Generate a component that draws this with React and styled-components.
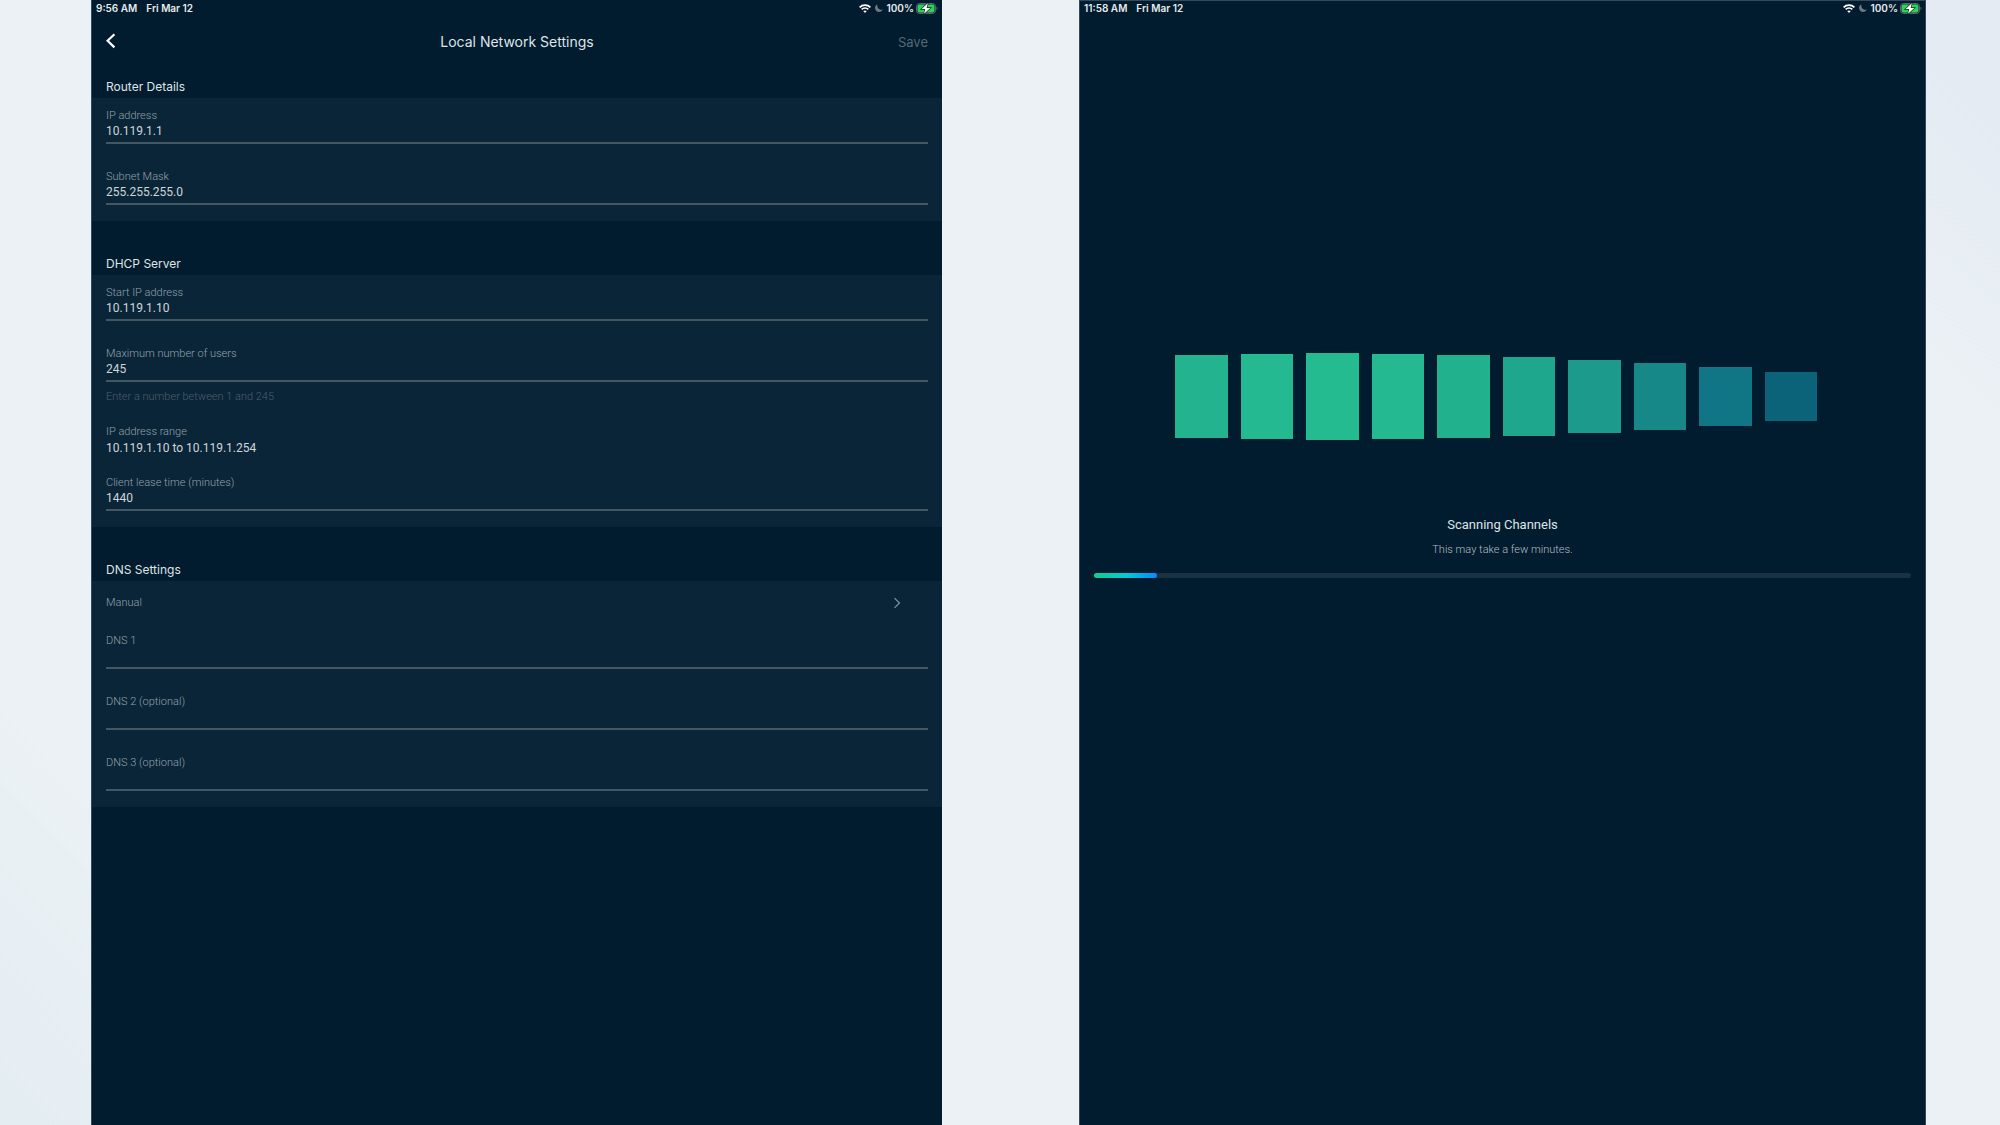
import * as React from "react"
import styled, { createGlobalStyle } from "styled-components"

const GlobalStyle = createGlobalStyle`
    *,
    *::before,
    *::after {
        box-sizing: border-box;
    }
    body {
        margin: 0;
        font-family: Roboto, "Liberation Sans", sans-serif;
        font-weight: 400;
        color: #dfe4e7;
    }
    h1,
    h2,
    p {
        margin: 0;
        font-weight: inherit;
    }
    button,
    input {
        margin: 0;
        padding: 0;
        border: none;
        background: none;
        color: inherit;
        font: inherit;
    }
`

const Page = styled.div`
    min-height: 100vh;
    display: grid;
    grid-template-columns: 851fr 847fr;
    gap: 137px;
    padding: 0 74px 0 91px;
    background: linear-gradient(
        45deg,
        #e4edf2 0%,
        #ebf1f5 14%,
        #ebf1f5 86%,
        #e4ebf2 96%
    );
`

const Screen = styled.main`
    display: flex;
    flex-direction: column;
    background: #001c2e;
    border-left: 1px solid #34495a;
    box-shadow: ${({ $framed }) =>
        $framed ? "inset 0 1px #34495a, inset -1px 0 #34495a" : "none"};
`

const StatusBar = styled.div`
    display: flex;
    align-items: center;
    justify-content: space-between;
    height: 16px;
    padding: 0 4px;
    font-family: Inter, "Liberation Sans", sans-serif;
    font-size: 10px;
    font-weight: 600;
    line-height: 16px;
    color: #e6eaec;
`

const StatusGroup = styled.div`
    display: flex;
    align-items: center;
    gap: ${({ $gap }) => $gap}px;
`

const NavBar = styled.header`
    display: grid;
    grid-template-columns: 1fr auto 1fr;
    align-items: center;
    height: 52px;
    margin-bottom: 8px;
    padding: 0 14px;
    font-family: Inter, "Liberation Sans", sans-serif;
`

const BackButton = styled.button`
    display: flex;
    justify-self: start;
    padding-bottom: 3px;
    color: #fff;
`

const NavTitle = styled.h1`
    font-size: 14px;
    line-height: 20px;
`

const SaveButton = styled.button`
    justify-self: end;
    font-size: 13px;
    line-height: 20px;
    color: #566874;
`

const Section = styled.section`
    & + & {
        margin-top: 32px;
    }
`

const SectionTitle = styled.h2`
    padding: 1px 14px;
    font-family: Inter, "Liberation Sans", sans-serif;
    font-size: 12px;
    line-height: 20px;
`

const Card = styled.div`
    display: flex;
    flex-direction: column;
    padding: 10px 14px 16px;
    background: #0a2538;
`

const FieldBox = styled.div`
    display: flex;
    flex-direction: column;

    & + & {
        margin-top: 25px;
    }
`

const Label = styled.label`
    font-size: 11px;
    font-weight: 300;
    line-height: 15px;
    color: #93a1ab;
`

const Input = styled.input`
    width: 100%;
    height: 21px;
    padding-bottom: 4px;
    border-bottom: 2px solid #425664;
    border-radius: 0;
    font-size: 12px;
    line-height: 15px;
    color: #cfd6da;
    outline: none;
`

const Hint = styled.p`
    margin-top: 7px;
    font-size: 11px;
    font-weight: 300;
    line-height: 15px;
    color: #4a5e6c;
`

const RangeBox = styled.div`
    display: flex;
    flex-direction: column;
    gap: 2px;
    margin: 20px 0 19px;
`

const RangeLabel = styled.p`
    font-size: 11px;
    font-weight: 300;
    line-height: 15px;
    color: #93a1ab;
`

const RangeValue = styled.p`
    font-size: 12px;
    line-height: 15px;
    color: #cfd6da;
`

const ModeButton = styled.button`
    display: flex;
    align-items: center;
    justify-content: space-between;
    height: 23px;
    margin-bottom: 19px;
    padding-right: 27px;
    font-size: 11px;
    font-weight: 300;
    line-height: 15px;
    color: #93a1ab;
`

const ScanArea = styled.div`
    display: flex;
    flex-direction: column;
    align-items: center;
    padding: 337px 15px 0 14px;
`

const Bars = styled.div`
    display: flex;
    align-items: center;
    gap: 13px;
    width: 100%;
    height: 87px;
    padding: 0 94px 0 81px;
`

const Bar = styled.div`
    flex: 1;
    height: ${({ $height }) => $height}px;
    background: ${({ $color }) => $color};
`

const ScanTitle = styled.h1`
    margin-top: 75px;
    font-size: 13px;
    line-height: 20px;
`

const ScanText = styled.p`
    margin-top: 7px;
    font-size: 11px;
    font-weight: 300;
    line-height: 15px;
    color: #b4bec5;
`

const Track = styled.div`
    width: 100%;
    height: 5px;
    margin-top: 16px;
    border-radius: 3px;
    background: #1a3142;
`

const TrackFill = styled.div`
    height: 100%;
    border-radius: 3px;
    background: linear-gradient(to right, #14c98c 0%, #00cdd6 50%, #008bff 100%);
`

const bars = [
    { height: 83, color: "#23b38e" },
    { height: 85, color: "#24b990" },
    { height: 87, color: "#24bb91" },
    { height: 85, color: "#24b990" },
    { height: 83, color: "#22b18d" },
    { height: 79, color: "#1fa78d" },
    { height: 73, color: "#1c9a8c" },
    { height: 67, color: "#178888" },
    { height: 59, color: "#107585" },
    { height: 49, color: "#0a6379" },
]

const WifiIcon = () => (
    <svg width="12" height="9" viewBox="0 0 12 9" fill="none" aria-hidden="true">
        <path d="M0.6 3.3C3.6 0.3 8.4 0.3 11.4 3.3" stroke="#fff" strokeWidth="1.7" />
        <path d="M2.7 5.4C4.5 3.6 7.5 3.6 9.3 5.4" stroke="#fff" strokeWidth="1.6" />
        <path d="M6 8.9L4.2 7.1C5.2 6.2 6.8 6.2 7.8 7.1Z" fill="#fff" />
    </svg>
)

const MoonIcon = () => (
    <svg width="8" height="8" viewBox="0 0 8 8" aria-hidden="true">
        <path
            d="M2.4 0.3C0.6 1.1 0 2.6 0 4C0 6.2 1.8 8 4 8C5.6 8 7.2 7.1 7.8 5.6C4.6 6.6 1.6 3.8 2.4 0.3Z"
            fill="#6b7983"
        />
    </svg>
)

const BatteryIcon = () => (
    <svg width="22" height="11" viewBox="0 0 22 11" aria-hidden="true">
        <rect
            x="0.5"
            y="0.5"
            width="19"
            height="10"
            rx="3"
            fill="#1d3445"
            stroke="#566672"
        />
        <path d="M20.5 3.8C21.8 4.1 21.8 6.9 20.5 7.2Z" fill="#566672" />
        <rect x="1.6" y="1.6" width="16.8" height="7.8" rx="1.8" fill="#30d158" />
        <path
            d="M11.8 0.2L5.6 6.1H9.2L8.1 10.8L14.3 4.9H10.7Z"
            fill="#fff"
            stroke="#12301f"
            strokeWidth="1.4"
            paintOrder="stroke"
        />
    </svg>
)

const Status = ({ time }) => {
    return (
        <StatusBar>
            <StatusGroup $gap={9}>
                <span>{time}</span>
                <span>Fri Mar 12</span>
            </StatusGroup>
            <StatusGroup $gap={4}>
                <WifiIcon />
                <MoonIcon />
                <StatusGroup $gap={2}>
                    <span>100%</span>
                    <BatteryIcon />
                </StatusGroup>
            </StatusGroup>
        </StatusBar>
    )
}

const Field = ({ id, label, value = "", hint }) => {
    return (
        <FieldBox>
            <Label htmlFor={id}>{label}</Label>
            <Input id={id} type="text" defaultValue={value} />
            {hint && <Hint>{hint}</Hint>}
        </FieldBox>
    )
}

const NetworkSettings = () => {
    return (
        <Screen>
            <Status time="9:56 AM" />
            <NavBar>
                <BackButton aria-label="Back">
                    <svg width="10" height="16" viewBox="0 0 10 16" fill="none">
                        <path d="M8.4 1.2L1.6 7.8L8.4 14.4" stroke="currentColor" strokeWidth="2.2" />
                    </svg>
                </BackButton>
                <NavTitle>Local Network Settings</NavTitle>
                <SaveButton>Save</SaveButton>
            </NavBar>

            <Section>
                <SectionTitle>Router Details</SectionTitle>
                <Card>
                    <Field id="ip" label="IP address" value="10.119.1.1" />
                    <Field id="mask" label="Subnet Mask" value="255.255.255.0" />
                </Card>
            </Section>

            <Section>
                <SectionTitle>DHCP Server</SectionTitle>
                <Card>
                    <Field id="start" label="Start IP address" value="10.119.1.10" />
                    <Field
                        id="users"
                        label="Maximum number of users"
                        value="245"
                        hint="Enter a number between 1 and 245"
                    />
                    <RangeBox>
                        <RangeLabel>IP address range</RangeLabel>
                        <RangeValue>10.119.1.10 to 10.119.1.254</RangeValue>
                    </RangeBox>
                    <Field id="lease" label="Client lease time (minutes)" value="1440" />
                </Card>
            </Section>

            <Section>
                <SectionTitle>DNS Settings</SectionTitle>
                <Card>
                    <ModeButton>
                        Manual
                        <svg width="8" height="12" viewBox="0 0 8 12" fill="none" aria-hidden="true">
                            <path d="M1.5 1.2L6.5 6L1.5 10.8" stroke="#8a98a2" strokeWidth="1.1" />
                        </svg>
                    </ModeButton>
                    <Field id="dns1" label="DNS 1" />
                    <Field id="dns2" label="DNS 2 (optional)" />
                    <Field id="dns3" label="DNS 3 (optional)" />
                </Card>
            </Section>
        </Screen>
    )
}

const ChannelScan = ({ progress }) => {
    return (
        <Screen $framed>
            <Status time="11:58 AM" />
            <ScanArea>
                <Bars>
                    {bars.map((bar, i) => (
                        <Bar key={i} $height={bar.height} $color={bar.color} />
                    ))}
                </Bars>
                <ScanTitle>Scanning Channels</ScanTitle>
                <ScanText>This may take a few minutes.</ScanText>
                <Track
                    role="progressbar"
                    aria-label="Scanning Channels"
                    aria-valuenow={progress}
                    aria-valuemin={0}
                    aria-valuemax={100}
                >
                    <TrackFill style={{ width: `${progress}%` }} />
                </Track>
            </ScanArea>
        </Screen>
    )
}

const App = () => {
    return (
        <>
            <GlobalStyle />
            <Page>
                <NetworkSettings />
                <ChannelScan progress={7.7} />
            </Page>
        </>
    )
}

export default App
